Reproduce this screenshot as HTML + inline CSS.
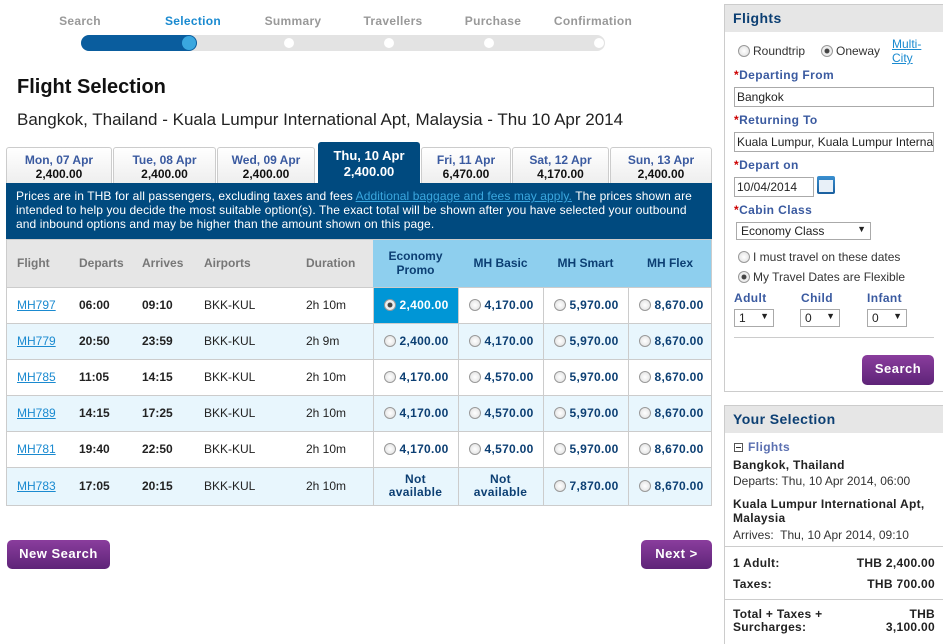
<!DOCTYPE html>
<html><head><meta charset="utf-8"><style>
*{box-sizing:border-box;margin:0;padding:0}
body{width:943px;height:644px;overflow:hidden;background:#fff;font-family:"Liberation Sans","DejaVu Sans",sans-serif;position:relative;color:#222}
.a{position:absolute}
.step{position:absolute;top:14px;font-size:12px;font-weight:bold;color:#999;width:110px;text-align:center;letter-spacing:.3px}
.dot{position:absolute;top:38px;width:10px;height:10px;border-radius:50%;background:#fff}
.tab{position:absolute;top:147px;height:36px;border:1px solid #ccc;border-bottom:none;background:linear-gradient(#fff,#eee);text-align:center;font-size:12px;font-weight:bold;line-height:14px;padding-top:5px;border-radius:3px 3px 0 0}
.tab b{color:#3a5aa0;display:block}
.tab span{color:#111}
table{position:absolute;left:6px;top:239px;width:706px;border-collapse:collapse;font-size:12px}
td,th{border-bottom:1px solid #ccc;height:36px;text-align:left;padding-left:11px}
th{height:48px;background:#e6e6e6;color:#777;font-size:12px}
th.p{background:#8ecfee;color:#0c3f73;text-align:center;padding:0}
td.p{border-left:1px solid #ccc;color:#0c3f73;font-weight:bold;padding-left:10px;white-space:nowrap;letter-spacing:.3px}
tr.alt td{background:#e8f6fd}
td.sel{background:#0096d6!important;color:#fff}
.r{display:inline-block;width:12px;height:12px;border-radius:50%;border:1px solid #999;background:radial-gradient(#fff,#ddd);vertical-align:-2px;margin-right:3px}
td.p .r{margin-right:4px}
.r.on{background:radial-gradient(#444 30%,#eee 40%)}
a{color:#1a8ad0}
td.b{font-weight:bold}
.btn{position:absolute;background:linear-gradient(#8a3d9d,#5e2478);color:#fff;font-weight:bold;font-size:13px;border-radius:5px;text-align:center;letter-spacing:.5px}
.lbl{position:absolute;font-size:12px;font-weight:bold;color:#3a5aa0;letter-spacing:.4px}
.lbl i{color:#c00;font-style:normal}
.inp{position:absolute;border:1px solid #aaa;background:#fff;font-size:12px;padding:2px 2px;height:20px;white-space:nowrap;overflow:hidden}
.sm{font-size:12px;color:#333}
</style></head><body>
<div class="step" style="left:25px">Search</div>
<div class="step" style="left:138px;color:#1a8ad0">Selection</div>
<div class="step" style="left:238px">Summary</div>
<div class="step" style="left:338px">Travellers</div>
<div class="step" style="left:438px">Purchase</div>
<div class="step" style="left:538px">Confirmation</div>
<div class="a" style="left:81px;top:35px;width:524px;height:16px;border-radius:8px;background:#e3e3e3"></div>
<div class="a" style="left:81px;top:35px;width:116px;height:16px;border-radius:8px;background:#0a5d9e"></div>
<div class="a" style="left:182px;top:36px;width:14px;height:14px;border-radius:50%;background:#3aa7df"></div>
<div class="dot" style="left:284px"></div><div class="dot" style="left:384px"></div><div class="dot" style="left:484px"></div><div class="dot" style="left:594px"></div>
<div class="a" style="left:17px;top:76px;font-size:20px;font-weight:bold;color:#111">Flight Selection</div>
<div class="a" style="left:17px;top:110px;font-size:17px;color:#222">Bangkok, Thailand - Kuala Lumpur International Apt, Malaysia - Thu 10 Apr 2014</div>
<div class="tab" style="left:6px;width:106px"><b>Mon, 07 Apr</b><span>2,400.00</span></div>
<div class="tab" style="left:113px;width:103px"><b>Tue, 08 Apr</b><span>2,400.00</span></div>
<div class="tab" style="left:217px;width:98px"><b>Wed, 09 Apr</b><span>2,400.00</span></div>
<div class="tab" style="left:318px;width:102px;top:142px;height:41px;background:#004a7f;border-color:#004a7f;font-size:13px;line-height:16px"><b style="color:#fff">Thu, 10 Apr</b><span style="color:#fff">2,400.00</span></div>
<div class="tab" style="left:421px;width:90px"><b>Fri, 11 Apr</b><span>6,470.00</span></div>
<div class="tab" style="left:512px;width:97px"><b>Sat, 12 Apr</b><span>4,170.00</span></div>
<div class="tab" style="left:610px;width:102px"><b>Sun, 13 Apr</b><span>2,400.00</span></div>
<div class="a" style="left:6px;top:183px;width:706px;height:56px;background:#004a7f;color:#fff;font-size:12px;line-height:14px;padding:6px 6px 0 10px;letter-spacing:.1px">Prices are in THB for all passengers, excluding taxes and fees <u style="color:#3aa7df">Additional baggage and fees may apply.</u> The prices shown are intended to help you decide the most suitable option(s). The exact total will be shown after you have selected your outbound and inbound options and may be higher than the amount shown on this page.</div>
<table>
<tr><th style="width:62px">Flight</th><th style="width:63px">Departs</th><th style="width:62px">Arrives</th><th style="width:102px">Airports</th><th style="width:78px">Duration</th><th class="p" style="width:85px">Economy<br>Promo</th><th class="p" style="width:85px">MH Basic</th><th class="p" style="width:85px">MH Smart</th><th class="p">MH Flex</th></tr>
<tr><td><a href="#">MH797</a></td><td class="b">06:00</td><td class="b">09:10</td><td>BKK-KUL</td><td>2h 10m</td><td class="p sel"><span class="r on"></span>2,400.00</td><td class="p"><span class="r"></span>4,170.00</td><td class="p"><span class="r"></span>5,970.00</td><td class="p"><span class="r"></span>8,670.00</td></tr>
<tr class="alt"><td><a href="#">MH779</a></td><td class="b">20:50</td><td class="b">23:59</td><td>BKK-KUL</td><td>2h 9m</td><td class="p"><span class="r"></span>2,400.00</td><td class="p"><span class="r"></span>4,170.00</td><td class="p"><span class="r"></span>5,970.00</td><td class="p"><span class="r"></span>8,670.00</td></tr>
<tr><td><a href="#">MH785</a></td><td class="b">11:05</td><td class="b">14:15</td><td>BKK-KUL</td><td>2h 10m</td><td class="p"><span class="r"></span>4,170.00</td><td class="p"><span class="r"></span>4,570.00</td><td class="p"><span class="r"></span>5,970.00</td><td class="p"><span class="r"></span>8,670.00</td></tr>
<tr class="alt"><td><a href="#">MH789</a></td><td class="b">14:15</td><td class="b">17:25</td><td>BKK-KUL</td><td>2h 10m</td><td class="p"><span class="r"></span>4,170.00</td><td class="p"><span class="r"></span>4,570.00</td><td class="p"><span class="r"></span>5,970.00</td><td class="p"><span class="r"></span>8,670.00</td></tr>
<tr><td><a href="#">MH781</a></td><td class="b">19:40</td><td class="b">22:50</td><td>BKK-KUL</td><td>2h 10m</td><td class="p"><span class="r"></span>4,170.00</td><td class="p"><span class="r"></span>4,570.00</td><td class="p"><span class="r"></span>5,970.00</td><td class="p"><span class="r"></span>8,670.00</td></tr>
<tr class="alt"><td style="height:38px"><a href="#">MH783</a></td><td class="b">17:05</td><td class="b">20:15</td><td>BKK-KUL</td><td>2h 10m</td><td class="p" style="text-align:center;padding:0;line-height:13px">Not<br>available</td><td class="p" style="text-align:center;padding:0;line-height:13px">Not<br>available</td><td class="p"><span class="r"></span>7,870.00</td><td class="p"><span class="r"></span>8,670.00</td></tr>
</table>
<div class="a" style="left:6px;top:239px;width:706px;height:267px;border:1px solid #ccc;pointer-events:none"></div>
<div class="btn" style="left:7px;top:540px;width:103px;height:29px;line-height:27px">New Search</div>
<div class="btn" style="left:641px;top:540px;width:71px;height:29px;line-height:27px">Next &gt;</div>

<div class="a" style="left:724px;top:4px;width:219px;height:388px;border:1px solid #ccc;border-right:none"></div>
<div class="a" style="left:725px;top:5px;width:218px;height:27px;background:#e6e6e6;font-size:14px;font-weight:bold;color:#0c3f73;padding:5px 8px;letter-spacing:.4px">Flights</div>
<div class="a sm" style="left:738px;top:44px"><span class="r"></span>Roundtrip</div>
<div class="a sm" style="left:821px;top:44px"><span class="r on"></span>Oneway</div>
<div class="a sm" style="left:892px;top:37px;line-height:14px"><a href="#">Multi-<br>City</a></div>
<div class="lbl" style="left:734px;top:68px"><i>*</i>Departing From</div>
<div class="inp" style="left:734px;top:87px;width:200px">Bangkok</div>
<div class="lbl" style="left:734px;top:113px"><i>*</i>Returning To</div>
<div class="inp" style="left:734px;top:132px;width:200px">Kuala Lumpur, Kuala Lumpur International</div>
<div class="lbl" style="left:734px;top:158px"><i>*</i>Depart on</div>
<div class="inp" style="left:734px;top:177px;width:80px">10/04/2014</div>
<div class="a" style="left:817px;top:176px;width:18px;height:18px;background:linear-gradient(#3a8fd0,#1a5f9e);border-radius:2px;padding:4px 2px 2px"><div style="background:#e8f0f8;height:100%"></div></div>
<div class="lbl" style="left:734px;top:203px"><i>*</i>Cabin Class</div>
<div class="inp" style="left:736px;top:222px;width:135px;height:18px;padding:1px 4px">Economy Class<span style="float:right;font-size:9px">▼</span></div>
<div class="a sm" style="left:738px;top:250px"><span class="r"></span>I must travel on these dates</div>
<div class="a sm" style="left:738px;top:270px"><span class="r on"></span>My Travel Dates are Flexible</div>
<div class="lbl" style="left:734px;top:291px">Adult</div>
<div class="lbl" style="left:801px;top:291px">Child</div>
<div class="lbl" style="left:867px;top:291px">Infant</div>
<div class="inp" style="left:734px;top:309px;width:40px;height:18px;padding:1px 4px">1<span style="float:right;font-size:9px">▼</span></div>
<div class="inp" style="left:800px;top:309px;width:40px;height:18px;padding:1px 4px">0<span style="float:right;font-size:9px">▼</span></div>
<div class="inp" style="left:867px;top:309px;width:40px;height:18px;padding:1px 4px">0<span style="float:right;font-size:9px">▼</span></div>
<div class="a" style="left:734px;top:337px;width:200px;height:1px;background:#ccc"></div>
<div class="btn" style="left:862px;top:355px;width:72px;height:30px;line-height:28px">Search</div>

<div class="a" style="left:724px;top:405px;width:219px;height:239px;border:1px solid #ccc;border-right:none;border-bottom:none"></div>
<div class="a" style="left:725px;top:406px;width:218px;height:27px;background:#e6e6e6;font-size:14px;font-weight:bold;color:#0c3f73;padding:5px 8px;letter-spacing:.4px">Your Selection</div>
<div class="a" style="left:734px;top:443px;width:9px;height:9px;border:1px solid #555"><div style="position:absolute;left:1px;top:3px;width:5px;height:1px;background:#333"></div></div>
<div class="lbl" style="left:748px;top:440px;color:#5a6fb0">Flights</div>
<div class="a" style="left:733px;top:458px;font-size:12px;font-weight:bold;letter-spacing:.3px">Bangkok, Thailand</div>
<div class="a sm" style="left:733px;top:474px">Departs: Thu, 10 Apr 2014, 06:00</div>
<div class="a" style="left:733px;top:497px;font-size:12px;font-weight:bold;line-height:14px;letter-spacing:.3px">Kuala Lumpur International Apt,<br>Malaysia</div>
<div class="a sm" style="left:733px;top:528px">Arrives:&nbsp; Thu, 10 Apr 2014, 09:10</div>
<div class="a" style="left:725px;top:546px;width:218px;height:1px;background:#ccc"></div>
<div class="a" style="left:733px;top:556px;font-size:12px;font-weight:bold;width:202px;letter-spacing:.3px">1 Adult:<span style="float:right">THB 2,400.00</span></div>
<div class="a" style="left:733px;top:577px;font-size:12px;font-weight:bold;width:202px;letter-spacing:.3px">Taxes:<span style="float:right">THB 700.00</span></div>
<div class="a" style="left:725px;top:599px;width:218px;height:1px;background:#ccc"></div>
<div class="a" style="left:733px;top:608px;font-size:12px;font-weight:bold;line-height:13px;letter-spacing:.3px">Total + Taxes +<br>Surcharges:</div>
<div class="a" style="left:833px;top:608px;width:102px;text-align:right;font-size:12px;font-weight:bold;line-height:13px;letter-spacing:.3px">THB<br>3,100.00</div>
</body></html>
